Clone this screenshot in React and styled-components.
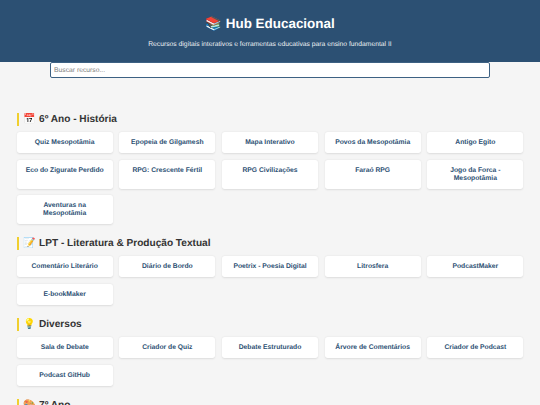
import React from "react";
import styled, { createGlobalStyle } from "styled-components";

const GlobalStyle = createGlobalStyle`
  * { box-sizing: border-box; margin: 0; padding: 0; }
  html, body { height: 405px; overflow: hidden; }
  body {
    background: #f5f5f5; font-family: "Liberation Sans", Arial, sans-serif; color: #333;
    text-rendering: geometricPrecision;
  }
`;
const Page = styled.div`height: 405px; overflow: hidden;`;
const Header = styled.header`
  height: 62px; background: #2c5073; color: #fff; text-align: center; padding-top: 15px;
`;
const Title = styled.h1`font-size: 13.45px; line-height: 17px; font-weight: 700;`;
const Subtitle = styled.p`font-size: 6.76px; line-height: 8px; margin-top: 9px; opacity: 0.92;`;
const Search = styled.input`
  display: block; width: 440px; height: 16px; margin: 0 auto; padding: 0 3px;
  border: 1px solid #3d6183; border-radius: 2px; background: #fff;
  font: 6.75px "Liberation Sans", Arial, sans-serif; outline: none;
  text-rendering: geometricPrecision;
  &::placeholder { color: #808080; }
`;
const Main = styled.main`padding: 35.4px 16.67px 0;`;
const Section = styled.section`margin-bottom: 13.33px;`;
const Heading = styled.h2`
  border-left: 2px solid #f0cf2e; padding: 0.67px 0 0 5px;
  font-size: 10.1px; line-height: 12.33px; height: 12.33px; margin-bottom: 6.67px;
`;
const Grid = styled.div`display: grid; grid-template-columns: repeat(5, 1fr); gap: 6.67px;`;
const Card = styled.a`
  display: block; text-align: center; background: #fff; color: #2c5073; border-radius: 2.67px;
  font-size: 6.76px; line-height: 7.67px; font-weight: 700; padding: 6.8px 6px 6.54px;
  box-shadow: 0 0.67px 2px rgba(0, 0, 0, 0.1);
`;
const sections = [
  ["📅 6º Ano - História", ["Quiz Mesopotâmia","Epopeia de Gilgamesh","Mapa Interativo","Povos da Mesopotâmia","Antigo Egito","Eco do Zigurate Perdido","RPG: Crescente Fértil","RPG Civilizações","Faraó RPG","Jogo da Forca - Mesopotâmia","Aventuras na Mesopotâmia"]],
  ["📝 LPT - Literatura & Produção Textual", ["Comentário Literário","Diário de Bordo","Poetrix - Poesia Digital","Litrosfera","PodcastMaker","E-bookMaker"]],
  ["💡 Diversos", ["Sala de Debate","Criador de Quiz","Debate Estruturado","Árvore de Comentários","Criador de Podcast","Podcast GitHub"]],
  ["🎨 7º Ano", []],
];
export default function App() {
  return (
    <Page>
      <GlobalStyle />
      <Header>
        <Title>📚 Hub Educacional</Title>
        <Subtitle>Recursos digitais interativos e ferramentas educativas para ensino fundamental II</Subtitle>
      </Header>
      <Search placeholder="Buscar recurso..." />
      <Main>
        {sections.map(([title, items]) => (
          <Section key={title}>
            <Heading>{title}</Heading>
            <Grid>{items.map((item) => <Card key={item}>{item}</Card>)}</Grid>
          </Section>
        ))}
      </Main>
    </Page>
  );
}
